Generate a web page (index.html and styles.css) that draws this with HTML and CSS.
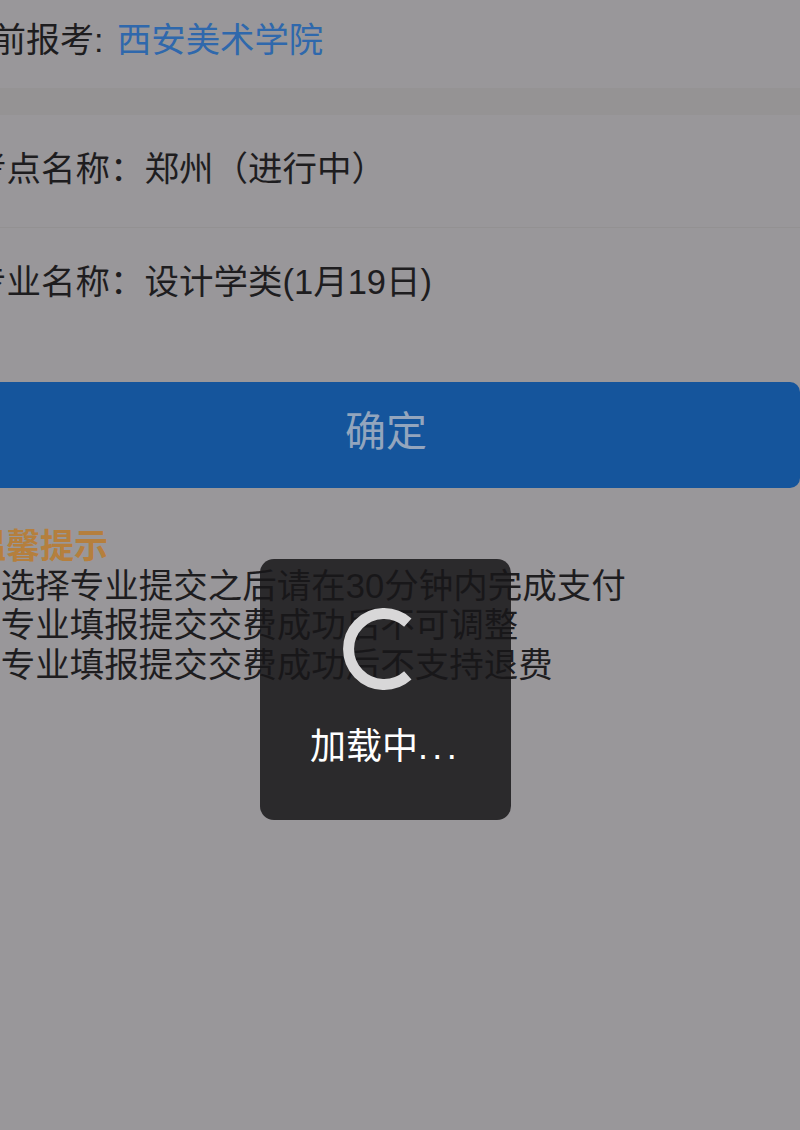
FILE: index.html
```html
<!DOCTYPE html>
<html lang="zh-CN">

<head>
    <meta charset="UTF-8">
    <title>确定专业</title>
    <link rel="stylesheet" href="styles.css">
</head>

<body>
    <div class="page">
        <div class="school">目前报考: <span class="school-name">西安美术学院</span></div>
        <div class="band"></div>
        <div class="row">考点名称：郑州（进行中）</div>
        <div class="row last">专业名称：设计学类(1月19日)</div>
        <div class="btn">确定</div>
        <div class="tips">
            <div class="tips-title">温馨提示</div>
            <div>1.选择专业提交之后请在30分钟内完成支付</div>
            <div>2.专业填报提交交费成功后不可调整</div>
            <div>3.专业填报提交交费成功后不支持退费</div>
        </div>
    </div>
    <div class="toast">
        <svg class="spinner" width="90" height="90" viewBox="0 0 90 90">
            <path d="M68.8 18.6 A35.5 35.5 0 1 0 68.8 71.4" fill="none" stroke="#d8d7d8" stroke-width="11" />
        </svg>
        <div class="toast-text">加载中<span class="dots">...</span></div>
    </div>
</body>

</html>
```

FILE: styles.css
```css
html,
body {
    margin: 0;
    padding: 0;
    height: 100%;
}

body {
    position: relative;
    overflow: hidden;
    background: #99979a;
    color: #1e1d1f;
    font-family: "Liberation Sans", "Noto Sans CJK SC", sans-serif;
    font-size: 34px;
}

.page {
    margin-left: -28px;
    width: 828px;
}

.school {
    height: 88px;
    box-sizing: border-box;
    padding-top: 16px;
    margin-left: -14px;
    line-height: 48px;
    white-space: nowrap;
}

.school-name {
    margin-left: 4px;
    color: #2f68ac;
    font-size: 34.4px;
}

.band {
    height: 27px;
    background: #959394;
}

.row {
    height: 113px;
    box-sizing: border-box;
    padding-top: 30px;
    font-size: 34.5px;
    line-height: 48px;
    border-bottom: 1px solid #939192;
    white-space: nowrap;
}

.row.last {
    border-bottom: none;
    height: 154px;
}

.btn {
    height: 106px;
    line-height: 100px;
    background: #15559c;
    border-radius: 10px;
    text-align: center;
    color: #93a5bd;
    font-size: 41px;
}

.tips {
    margin-top: 39px;
    font-size: 34.5px;
    line-height: 39.5px;
    white-space: nowrap;
}

.tips-title {
    color: #b57f3d;
    font-weight: bold;
    font-size: 34px;
}

.toast {
    position: absolute;
    left: 260px;
    top: 559px;
    width: 251px;
    height: 261px;
    border-radius: 14px;
    background: rgba(23, 22, 25, 0.85);
    display: flex;
    flex-direction: column;
    align-items: center;
    color: #fff;
}

.spinner {
    display: block;
    margin-top: 45px;
    margin-left: -3px;
}

.toast-text {
    margin-top: 29px;
    font-size: 36px;
    line-height: 48px;
    white-space: nowrap;
}

.dots {
    letter-spacing: 4.3px;
}
```
